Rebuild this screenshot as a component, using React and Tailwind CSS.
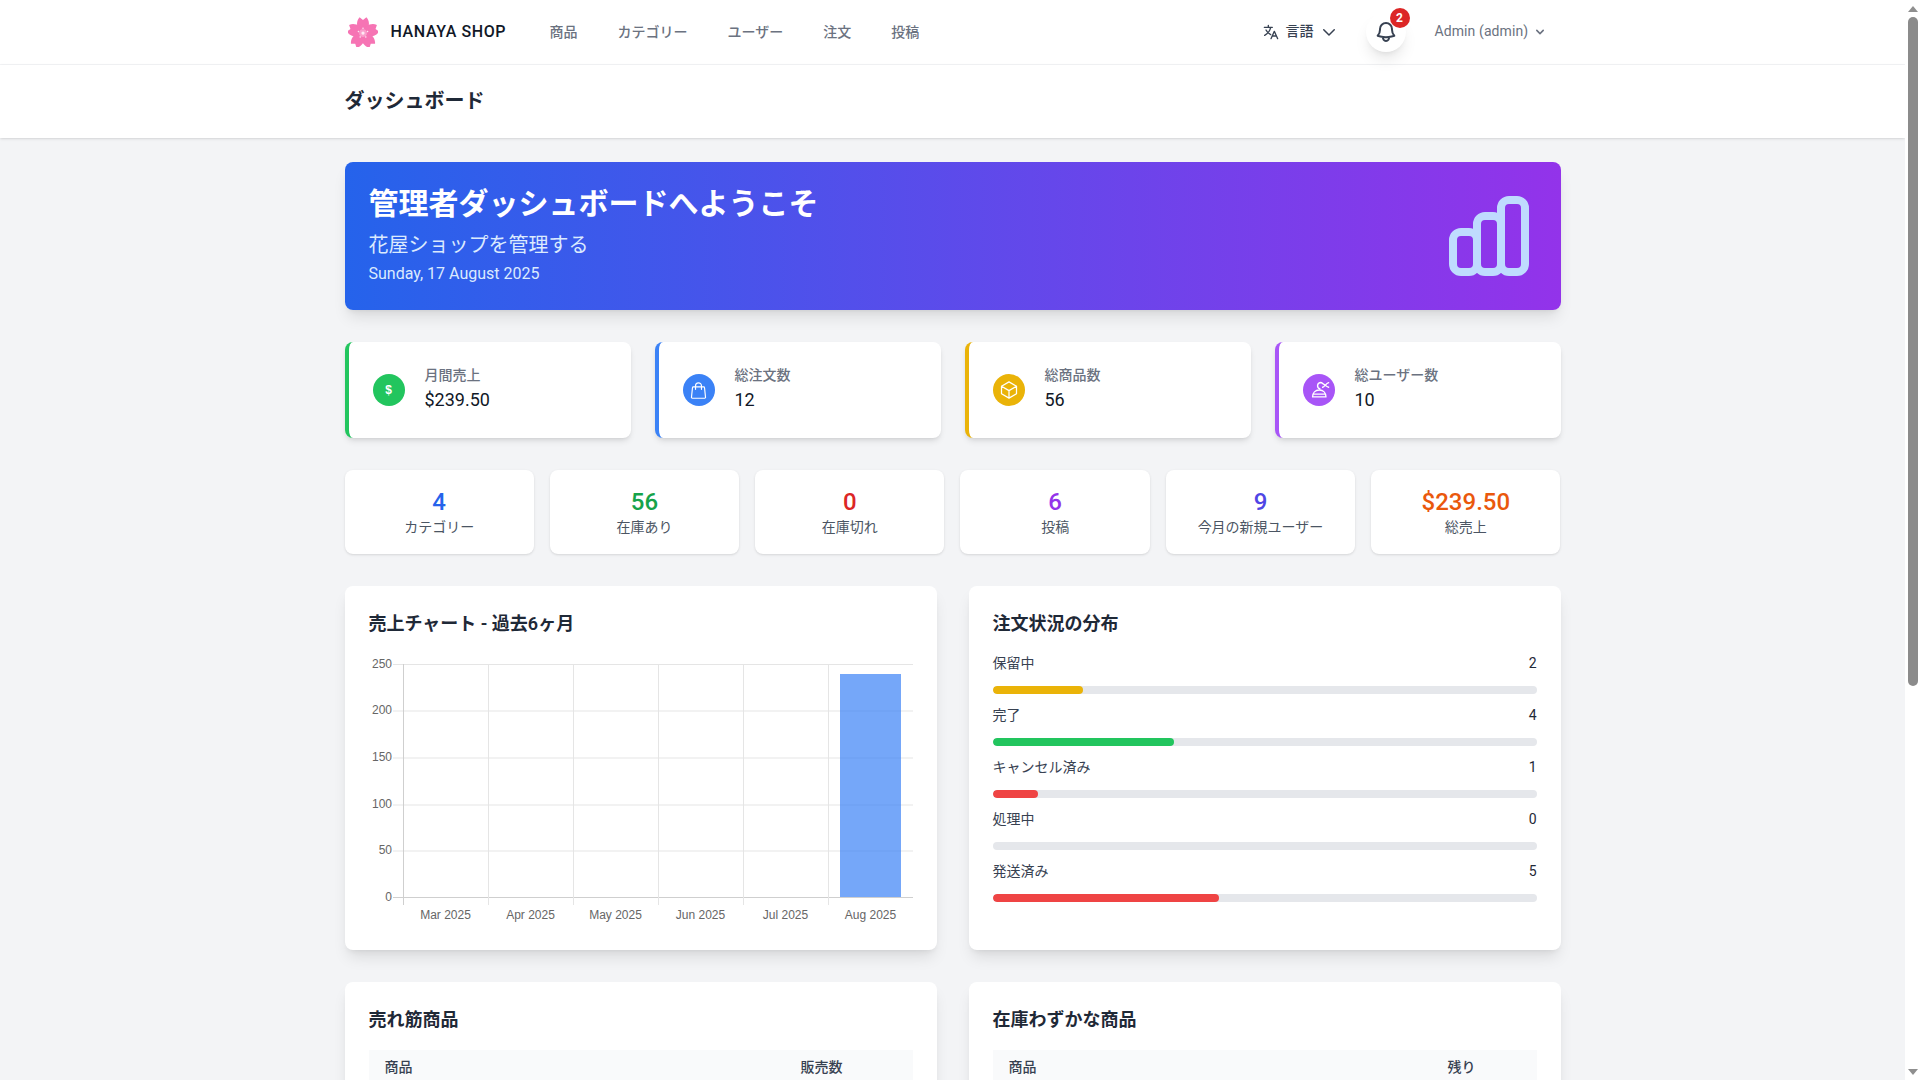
import React from "react";

function Flower() {
  const petals = [0, 72, 144, 216, 288];
  return (
    <svg viewBox="2 1.5 28 28" className="w-[30px] h-[30px] ml-[3px] shrink-0">
      {petals.map((a) => (
        <path
          key={a}
          transform={`rotate(${a} 16 16.5)`}
          d="M16 17.5 C9.5 13 9 6 12.8 1.8 L16 4.2 L19.2 1.8 C23 6 22.5 13 16 17.5 Z"
          fill="#f674b4"
        />
      ))}
      <circle cx="16" cy="16.5" r="3.6" fill="#fa9fcc" />
      <circle cx="16" cy="16.5" r="1.5" fill="#ffe9f4" />
      {petals.map((a) => (
        <circle key={a} transform={`rotate(${a} 16 16.5)`} cx="16" cy="12" r="0.7" fill="#fde7f3" />
      ))}
    </svg>
  );
}

function Translate() {
  return (
    <svg viewBox="0 0 24 24" fill="none" stroke="#374151" strokeWidth="2" strokeLinecap="round" strokeLinejoin="round" className="w-4 h-4 shrink-0">
      <path d="M2 5h12M8 2v3M11.5 5c-1 5-4.5 9.5-9 12M4.5 9c1.5 3 4 5.5 7 7M12 22l5-11 5 11M14 18h6" />
    </svg>
  );
}

function Stroke({ children, cls, sw = 1.5 }) {
  return (
    <svg viewBox="0 0 24 24" fill="none" stroke="currentColor" strokeWidth={sw} strokeLinecap="round" strokeLinejoin="round" className={cls}>
      {children}
    </svg>
  );
}

const statCards = [
  {
    label: "月間売上",
    value: "$239.50",
    border: "border-[#22c55e]",
    bg: "bg-[#22c55e]",
    icon: <span className="text-white text-[12px] leading-none font-bold font-['Liberation_Sans',sans-serif]">$</span>,
  },
  {
    label: "総注文数",
    value: "12",
    border: "border-[#3b82f6]",
    bg: "bg-[#3b82f6]",
    icon: (
      <Stroke cls="w-[19px] h-[19px] text-white">
        <path d="M15.75 10.5V6a3.75 3.75 0 10-7.5 0v4.5m11.356-1.993l1.263 12c.07.665-.45 1.243-1.119 1.243H4.25a1.125 1.125 0 01-1.12-1.243l1.264-12A1.125 1.125 0 015.513 7.5h12.974c.576 0 1.059.435 1.119 1.007z" />
      </Stroke>
    ),
  },
  {
    label: "総商品数",
    value: "56",
    border: "border-[#eab308]",
    bg: "bg-[#eab308]",
    icon: (
      <Stroke cls="w-5 h-5 text-white">
        <path d="M21 7.5l-9-5.25L3 7.5m18 0l-9 5.25m9-5.25v9l-9 5.25M3 7.5l9 5.25M3 7.5v9l9 5.25m0-9v9" />
      </Stroke>
    ),
  },
  {
    label: "総ユーザー数",
    value: "10",
    border: "border-[#a855f7]",
    bg: "bg-[#a855f7]",
    icon: (
      <Stroke cls="w-[22px] h-[22px] text-white">
        <path d="M5 19.5c0-4.5 3-7.5 7.3-7.5s7.3 3 7.3 7.5H5zM5.5 16.5h13.5M13 10.8a3.6 3.6 0 01.5-7c1 0 1.8.3 2.5 1M16 5c2 .5 3.5 3.5 6.5 4M16 9c2-.5 3.5-4 6.5-5" />
      </Stroke>
    ),
  },
];

const miniStats = [
  { value: "4", label: "カテゴリー", color: "text-[#2563eb]" },
  { value: "56", label: "在庫あり", color: "text-[#16a34a]" },
  { value: "0", label: "在庫切れ", color: "text-[#dc2626]" },
  { value: "6", label: "投稿", color: "text-[#9333ea]" },
  { value: "9", label: "今月の新規ユーザー", color: "text-[#4f46e5]" },
  { value: "$239.50", label: "総売上", color: "text-[#ea580c]" },
];

const statuses = [
  { label: "保留中", count: 2, color: "bg-[#eab308]" },
  { label: "完了", count: 4, color: "bg-[#22c55e]" },
  { label: "キャンセル済み", count: 1, color: "bg-[#ef4444]" },
  { label: "処理中", count: 0, color: "bg-[#3b82f6]" },
  { label: "発送済み", count: 5, color: "bg-[#ef4444]" },
];

function SalesChart() {
  const xs = [34, 119, 204, 289, 374, 459, 544];
  const ys = [10, 56.5, 103.5, 150.5, 196.5, 243];
  const yLabels = ["250", "200", "150", "100", "50", "0"];
  const months = ["Mar 2025", "Apr 2025", "May 2025", "Jun 2025", "Jul 2025", "Aug 2025"];
  return (
    <svg viewBox="0 0 544 272" className="block w-[544px] h-[272px]">
      {ys.map((y, i) => (
        <line key={y} x1="24" x2="544" y1={y + 0.5} y2={y + 0.5} stroke={i === 5 ? "#cfcfcf" : "#e5e5e5"} />
      ))}
      {xs.map((x, i) => (
        <line key={x} x1={x + 0.5} x2={x + 0.5} y1="10" y2="251" stroke={i === 0 ? "#cfcfcf" : "#e5e5e5"} />
      ))}
      <rect x="471" y="20" width="61" height="223" fill="rgba(59,130,246,0.7)" />
      {yLabels.map((l, i) => (
        <text key={l} x="23" y={ys[i] + 3.5} textAnchor="end" fontSize="12" fill="#666" fontFamily="'Liberation Sans',Arial,sans-serif">
          {l}
        </text>
      ))}
      {months.map((m, i) => (
        <text key={m} x={xs[i] + 42.5} y="265" textAnchor="middle" fontSize="12" fill="#666" fontFamily="'Liberation Sans',Arial,sans-serif">
          {m}
        </text>
      ))}
    </svg>
  );
}

function Scrollbar() {
  return (
    <div className="sticky top-0 h-screen w-[15px] shrink-0 bg-white flex flex-col items-center">
      <div className="h-[17px] flex items-center justify-center">
        <div className="w-0 h-0 border-x-[5px] border-x-transparent border-b-[6px] border-b-[#8f8f8f]" />
      </div>
      <div className="w-[10px] h-[669px] rounded-full bg-[#8b8b8b]" />
      <div className="flex-1" />
      <div className="h-[17px] flex items-center justify-center">
        <div className="w-0 h-0 border-x-[5px] border-x-transparent border-t-[6px] border-t-[#8f8f8f]" />
      </div>
    </div>
  );
}

export default function App() {
  return (
    <div className="flex items-start bg-white font-['Roboto','Noto_Sans_CJK_JP',sans-serif]">
      <div className="flex-1 min-w-0 min-h-screen bg-[#f3f4f6]">
        <nav className="bg-white border-b border-[#f3f4f6]">
          <div className="max-w-7xl mx-auto px-8 h-16 flex justify-between">
            <div className="flex items-center">
              <Flower />
              <span className="ml-[13px] w-[159px] text-base font-medium tracking-[0.6px] text-[#111827] whitespace-nowrap">HANAYA SHOP</span>
              <div className="flex gap-10 text-sm font-medium text-[#6b7280]">
                <span>商品</span>
                <span>カテゴリー</span>
                <span>ユーザー</span>
                <span>注文</span>
                <span>投稿</span>
              </div>
            </div>
            <div className="flex items-center">
              <div className="flex items-center text-sm font-medium text-[#374151]">
                <Translate />
                <span className="ml-[7px] leading-[18px] pb-[2px]">言語</span>
                <Stroke sw={2} cls="ml-[6px] w-[18px] h-[18px] text-[#374151]">
                  <path d="M19 9l-7 7-7-7" />
                </Stroke>
              </div>
              <div className="relative ml-[28px] w-10 h-10 rounded-full bg-white shadow-lg flex items-center justify-center text-[#374151]">
                <Stroke sw={2} cls="w-6 h-6">
                  <path d="M14.857 17.082a23.848 23.848 0 005.454-1.31A8.967 8.967 0 0118 9.75V9A6 6 0 006 9v.75a8.967 8.967 0 01-2.312 6.022c1.733.64 3.56 1.085 5.455 1.31m5.714 0a24.255 24.255 0 01-5.714 0m5.714 0a3 3 0 11-5.714 0" />
                </Stroke>
                <span className="absolute -top-1 -right-1 w-5 h-5 rounded-full bg-[#dc2626] text-white text-xs font-bold flex items-center justify-center">2</span>
              </div>
              <div className="ml-[29px] mr-[13px] w-[113px] flex items-center justify-between text-sm text-[#6b7280]">
                <span className="leading-[18px] pb-[2px] tracking-[0.1px]">Admin (admin)</span>
                <svg viewBox="0 0 20 20" fill="currentColor" className="w-4 h-4">
                  <path fillRule="evenodd" clipRule="evenodd" d="M5.293 7.293a1 1 0 011.414 0L10 10.586l3.293-3.293a1 1 0 111.414 1.414l-4 4a1 1 0 01-1.414 0l-4-4a1 1 0 010-1.414z" />
                </svg>
              </div>
            </div>
          </div>
        </nav>

        <header className="bg-white shadow">
          <div className="max-w-7xl mx-auto px-8 py-6">
            <h2 className="text-xl leading-tight font-semibold text-[#1f2937]">ダッシュボード</h2>
          </div>
        </header>

        <main className="py-6">
          <div className="max-w-7xl mx-auto px-8">
            <div className="mb-8 h-[148px] rounded-lg shadow-lg bg-linear-to-r/srgb from-[#2563eb] to-[#9333ea] p-6 flex items-center justify-between text-white">
              <div className="pb-[1px]">
                <h1 className="text-3xl font-bold leading-9">管理者ダッシュボードへようこそ</h1>
                <p className="mt-[9px] text-xl leading-7 text-[#dbeafe]">花屋ショップを管理する</p>
                <p className="mt-[3px] text-base leading-6 text-[#dbeafe]">Sunday, 17 August 2025</p>
              </div>
              <svg viewBox="0 0 24 24" fill="none" stroke="currentColor" strokeWidth="2" strokeLinecap="round" strokeLinejoin="round" className="w-24 h-24 text-[#bfdbfe]">
                <path d="M9 19v-6a2 2 0 00-2-2H5a2 2 0 00-2 2v6a2 2 0 002 2h2a2 2 0 002-2zm0 0V9a2 2 0 012-2h2a2 2 0 012 2v10m-6 0a2 2 0 002 2h2a2 2 0 002-2m0 0V5a2 2 0 012-2h2a2 2 0 012 2v14a2 2 0 01-2 2h-2a2 2 0 01-2-2z" />
              </svg>
            </div>

            <div className="mb-8 grid grid-cols-4 gap-6">
              {statCards.map((c) => (
                <div key={c.label} className={`bg-white rounded-lg shadow-md border-l-4 ${c.border} p-6 flex items-center`}>
                  <div className={`w-8 h-8 rounded-full ${c.bg} flex items-center justify-center shrink-0`}>{c.icon}</div>
                  <div className="ml-5">
                    <p className="text-sm leading-[18px] pb-[2px] font-medium text-[#6b7280]">{c.label}</p>
                    <p className="text-lg text-[#111827]">{c.value}</p>
                  </div>
                </div>
              ))}
            </div>

            <div className="mb-8 grid grid-cols-6 gap-4">
              {miniStats.map((s) => (
                <div key={s.label} className="bg-white rounded-lg shadow p-4 text-center">
                  <div className={`text-2xl font-medium ${s.color}`}>{s.value}</div>
                  <div className="text-sm leading-[18px] pb-[2px] text-[#4b5563]">{s.label}</div>
                </div>
              ))}
            </div>

            <div className="mb-8 grid grid-cols-2 gap-8">
              <div className="bg-white rounded-lg shadow-lg p-6">
                <h3 className="mb-4 text-lg font-semibold text-[#1f2937]">売上チャート - 過去6ヶ月</h3>
                <SalesChart />
              </div>
              <div className="bg-white rounded-lg shadow-lg p-6">
                <h3 className="mb-4 text-lg font-semibold text-[#1f2937]">注文状況の分布</h3>
                <div className="flex flex-col gap-3">
                  {statuses.map((s) => (
                    <div key={s.label} className="flex flex-col gap-3">
                      <div className="flex justify-between text-sm leading-[18px] pb-[2px]">
                        <span className="text-[#374151]">{s.label}</span>
                        <span className="text-[#1f2937]">{s.count}</span>
                      </div>
                      <div className="h-2 rounded-full bg-[#e5e7eb] overflow-hidden">
                        <div className={`h-full rounded-full ${s.color}`} style={{ width: `${(s.count / 12) * 100}%` }} />
                      </div>
                    </div>
                  ))}
                </div>
              </div>
            </div>

            <div className="grid grid-cols-2 gap-8">
              {[
                { title: "売れ筋商品", col: "販売数", w: "w-[96px]" },
                { title: "在庫わずかな商品", col: "残り", w: "w-[73px]" },
              ].map((t) => (
                <div key={t.title} className="bg-white rounded-lg shadow-lg p-6 h-[684px]">
                  <h3 className="mb-4 text-lg font-semibold text-[#1f2937]">{t.title}</h3>
                  <div className="bg-[#f9fafb] flex justify-between h-9 items-center pb-[2px] px-4 text-sm font-medium text-[#374151]">
                    <span>商品</span>
                    <span className={t.w}>{t.col}</span>
                  </div>
                </div>
              ))}
            </div>
          </div>
        </main>
      </div>
      <Scrollbar />
    </div>
  );
}
